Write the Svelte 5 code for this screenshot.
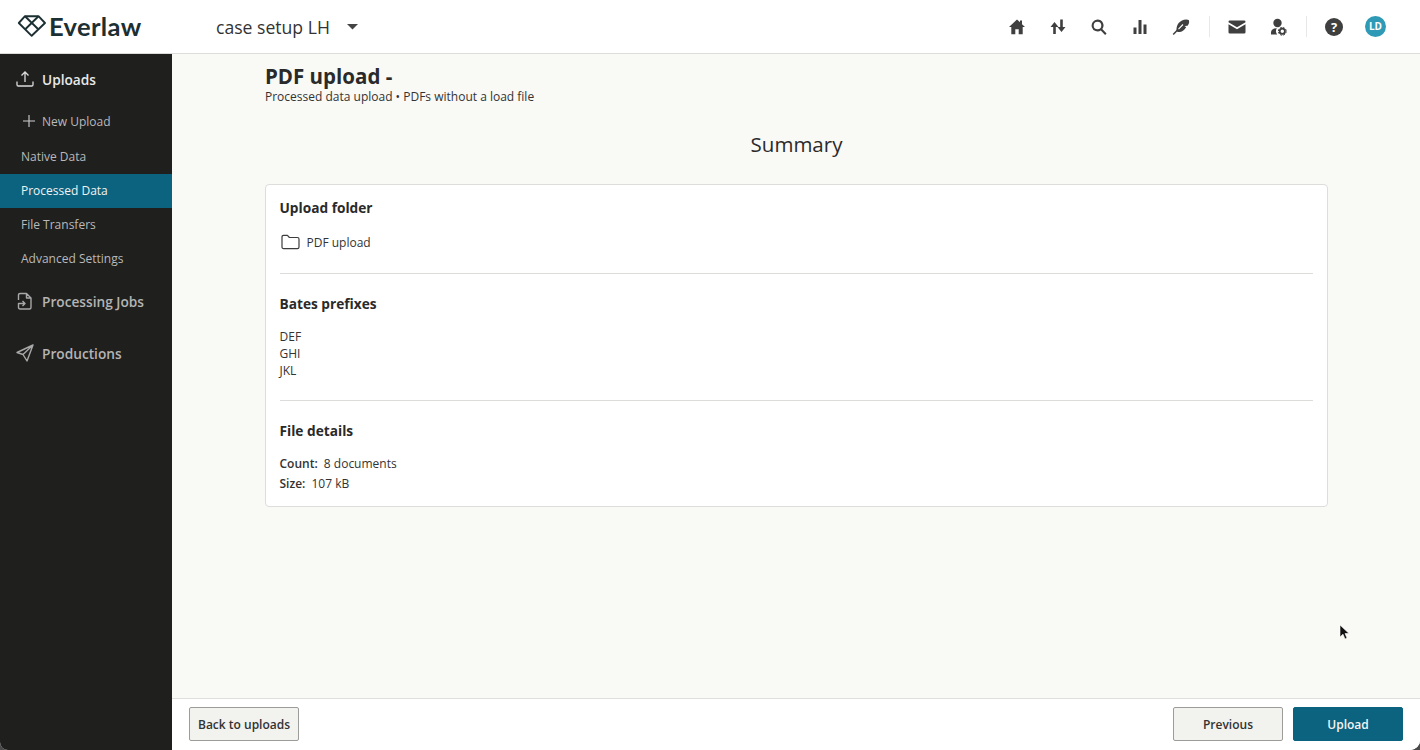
<script>
  const subnav = [
    { label: 'Native Data' },
    { label: 'Processed Data', active: true },
    { label: 'File Transfers' },
    { label: 'Advanced Settings' }
  ];
</script>

<div class="window">
<div class="app">
  <header class="top">
    <div class="logo">
      <svg width="30" height="24" viewBox="0 0 30 24" fill="none" stroke="#1c3034" stroke-width="1.900" stroke-linejoin="round">
        <path d="M8 2.200h13.500L28 9 14.700 21.800 1.800 9z"/>
        <path d="M8 2.200l13 12.800M21.500 2.200L8.500 15"/>
      </svg>
      <span class="wordmark">Everlaw</span>
    </div>
    <div class="case">
      <span>case setup LH</span>
      <svg width="11" height="6" viewBox="0 0 11 6"><path d="M0 0h11L5.500 5.500z" fill="#444"/></svg>
    </div>
    <nav class="tools">
      <svg class="ic" viewBox="0 0 18 18"><path d="M9 1.500L1 9h2.300v7.300h4v-5h3.400v5h4V9H17l-3-2.800V2.500h-2v1.800z"/></svg>
      <svg class="ic" viewBox="0 0 18 18"><path d="M5.500 4L1.500 9h2.700v7h2.600V9h2.700zM12.500 14l4-5h-2.700V1.500h-2.600V9H8.500z"/></svg>
      <svg class="ic" viewBox="0 0 18 18"><path fill-rule="evenodd" d="M7.500 1.500a6 6 0 0 1 4.800 9.600l4.300 4.300-1.500 1.500-4.300-4.300A6 6 0 1 1 7.500 1.500zm0 2.200a3.800 3.800 0 1 0 0 7.600 3.800 3.800 0 0 0 0-7.600z"/></svg>
      <svg class="ic" viewBox="0 0 18 18"><path d="M2.500 9.500h3V16h-3zM7.500 2h3v14h-3zM12.500 6.500h3V16h-3z"/></svg>
      <svg class="ic" viewBox="0 0 18 18"><path d="M1.200 16.500L6.500 11" fill="none" stroke="#3f3f3f" stroke-width="1.500"/><path d="M4.800 13.500C3.800 9.500 5.500 5 9.500 2.800 12 1.500 14.800 1 16.800 2c.8 1.800.2 4-1.200 5.700l-3 .3 1.600 1.300c-2.500 4-6 5.700-9.400 4.200z"/><path d="M6.500 11.200l4.500-4.700" fill="none" stroke="#fff" stroke-width="1.100"/></svg>
      <span class="sep"></span>
      <svg class="ic" viewBox="0 0 18 18"><path d="M.500 3.800A1.300 1.300 0 0 1 1.800 2.500h14.400a1.300 1.300 0 0 1 1.300 1.300v.5L9 9.300.500 4.300zM.500 6.300L9 11.300l8.500-5v7.900a1.300 1.300 0 0 1-1.300 1.300H1.800a1.300 1.300 0 0 1-1.300-1.300z"/></svg>
      <svg class="ic" viewBox="0 0 18 18"><circle cx="8.500" cy="5" r="4.200"/><path d="M2 16.500v-2C2 12 4 10.300 7.500 10.300h.3a5.500 5.500 0 0 0 .4 6.200z"/><circle cx="13.300" cy="13.300" r="2.600" fill="none" stroke="#3f3f3f" stroke-width="1.800"/><circle cx="13.300" cy="13.300" r="3.900" fill="none" stroke="#3f3f3f" stroke-width="1" stroke-dasharray="2 1.060"/></svg>
      <span class="sep"></span>
      <span class="help">?</span>
      <span class="avatar">LD</span>
    </nav>
  </header>

  <div class="body">
    <aside class="side">
      <div class="section first">
        <svg class="sico" viewBox="0 0 18 18" fill="none" stroke="#dcdcdc" stroke-width="1.300"><path d="M9 12V2M5.500 5.500L9 2l3.500 3.500M1 11.500v3.200c0 .8.500 1.300 1.300 1.300h13.400c.8 0 1.300-.5 1.300-1.300v-3.200"/></svg>
        <span class="white">Uploads</span>
      </div>
      <div class="new">
        <svg width="12" height="12" viewBox="0 0 12 12" stroke="#cfcfcf" stroke-width="1.100"><path d="M6 0v12M0 6h12"/></svg>
        <span>New Upload</span>
      </div>
      {#each subnav as item}
        <div class="sub" class:active={item.active}>{item.label}</div>
      {/each}
      <div class="section second">
        <svg class="sico" viewBox="0 0 18 18" fill="none" stroke="#a8a8a8" stroke-width="1.400" stroke-linejoin="round"><path d="M2.500 8V3c0-1 .7-1.500 1.500-1.500h6.500L15 6v9.500c0 .9-.7 1.500-1.500 1.500H4c-.8 0-1.500-.6-1.500-1.500V11.500h6.500M10.500 1.500V6H15M6.500 9l2.500 2.500L6.500 14"/></svg>
        <span>Processing Jobs</span>
      </div>
      <div class="section third">
        <svg class="sico" viewBox="0 0 18 18" fill="none" stroke="#a8a8a8" stroke-width="1.400" stroke-linejoin="round"><path d="M17 1L1 8.500l6 2 4 6.500zM17 1L7 10.500"/></svg>
        <span>Productions</span>
      </div>
    </aside>

    <main class="main">
      <div class="scroll">
        <h1>PDF upload -</h1>
        <p class="lede">Processed data upload • PDFs without a load file</p>
        <h2>Summary</h2>
        <section class="card">
          <div class="block folder">
            <h3>Upload folder</h3>
            <div class="row">
              <svg width="19" height="16" viewBox="0 0 19 16" fill="none" stroke="#3c3c3c" stroke-width="1.200" stroke-linejoin="round"><path d="M1 3c0-1 .6-1.700 1.600-1.700h3.800l2 2.200h8c1 0 1.600.6 1.600 1.500v8c0 1-.6 1.600-1.600 1.600H2.600C1.600 14.600 1 14 1 13z"/></svg>
              <span>PDF upload</span>
            </div>
          </div>
          <div class="block bates">
            <h3>Bates prefixes</h3>
            <div class="list"><div>DEF</div><div>GHI</div><div>JKL</div></div>
          </div>
          <div class="block details">
            <h3>File details</h3>
            <div class="kv"><b>Count:</b> 8 documents</div>
            <div class="kv"><b>Size:</b> 107 kB</div>
          </div>
        </section>
      </div>
      <footer class="foot">
        <button class="btn">Back to uploads</button>
        <div class="right">
          <button class="btn">Previous</button>
          <button class="btn primary">Upload</button>
        </div>
      </footer>
      <svg class="cursor" width="12" height="17" viewBox="0 0 12 17"><path d="M1 1v12l3-2.800 2 4.800 2-.9-2-4.600h4z" fill="#111" stroke="#fff" stroke-width=".6"/></svg>
    </main>
  </div>
</div>
</div>

<style>
  :global(body) { margin: 0; background: #fff; }
  .window { width: 1420px; height: 750px; background: #4a4a4a; overflow: hidden; }
  .app {
    width: 1420px; height: 750px; overflow: hidden; display: flex; flex-direction: column;
    border-radius: 0 0 10px 8px; background: #fff;
    font-family: "Open Sans", "Noto Sans", sans-serif; color: #333; font-size: 12px;
  }
  .top {
    height: 53px; flex: none; display: flex; align-items: center; background: #fff;
    border-bottom: 1px solid #dcdcd9;
  }
  .logo { width: 216px; padding-left: 17px; box-sizing: border-box; display: flex; align-items: center; gap: 2px; margin-top: -1px; }
  .wordmark { font-family: Lato, sans-serif; font-size: 25.500px; color: #1c3034; font-weight: 700; letter-spacing: .35px; }
  .case { display: flex; align-items: center; gap: 17px; font-size: 17.600px; font-weight: 500; color: #333; }
  .tools { margin-left: auto; display: flex; align-items: center; padding-right: 34px; }
  .ic { width: 18px; height: 18px; fill: #3f3f3f; margin-right: 23px; flex: none; }
  .sep { width: 1px; height: 21px; background: #e8e8e6; margin: 0 18px 0 -4px; }
  .help {
    width: 18px; height: 18px; border-radius: 50%; background: #3f3f3f; color: #fff; font-weight: 700;
    font-size: 13px; line-height: 18px; text-align: center; margin-right: 22px;
  }
  .avatar {
    width: 21px; height: 21px; border-radius: 50%; background: #2f9ab5; color: #fff; font-weight: 700;
    font-size: 10px; line-height: 21px; text-align: center;
  }
  .body { flex: 1; display: flex; min-height: 0; }
  .side {
    width: 172px; flex: none; background: #1f1f1e; color: #b4b4b4;
    display: flex; flex-direction: column;
  }
  .section { display: flex; align-items: center; gap: 8px; padding-left: 16px; font-size: 13.700px; font-weight: 600; height: 20px; color: #b4b4b4; }
  .section.first { margin-top: 15px; }
  .section.second { margin-top: 15px; }
  .section.third { margin-top: 32px; }
  .white { color: #e8e8e8; }
  .sico { width: 18px; height: 18px; flex: none; }
  .new { display: flex; align-items: center; gap: 7px; padding-left: 23px; height: 36px; margin: 14px 0 1px; color: #b9b9b9; }
  .sub { height: 34px; line-height: 34px; padding-left: 21px; color: #b9b9b9; }
  .sub.active { background: #0c637f; color: #f2f2f2; font-weight: 500; }
  .main { flex: 1; display: flex; flex-direction: column; position: relative; background: #f9f9f6; min-width: 0; }
  .scroll { flex: 1; padding: 10px 92px 0 93px; min-height: 0; }
  h1 { margin: 0 0 1px; font-size: 20.500px; font-weight: 700; line-height: 24px; color: #2a2a2a; }
  .lede { margin: 0; line-height: 16px; color: #333; }
  h2 { margin: 25px 0 0; font-size: 20.500px; font-weight: 400; line-height: 28px; text-align: center; color: #2a2a2a; }
  .card {
    margin-top: 26px; background: #fff; border: 1px solid #dddddb; border-radius: 4px; padding: 0 14px 0 13.500px; height: 323px; box-sizing: border-box;
  }
  .block { border-bottom: 1px solid #dcdcda; }
  .block:last-child { border-bottom: 0; }
  h3 { margin: 0; font-size: 13.700px; font-weight: 700; line-height: 20px; color: #2a2a2a; }
  .folder { padding-top: 13px; height: 89px; box-sizing: border-box; }
  .row { display: flex; align-items: center; gap: 7px; margin-top: 14px; height: 20px; margin-left: 1px; }
  .bates { padding-top: 20px; height: 127px; box-sizing: border-box; }
  .list { margin-top: 14px; line-height: 17px; }
  .details { padding-top: 20px; }
  .kv { line-height: 20px; }
  .details h3 + .kv { margin-top: 13px; }
  .kv b { font-weight: 600; margin-right: 3px; }
  .foot {
    height: 52px; flex: none; border-top: 1px solid #dfdfdc; background: #fff; display: flex; align-items: center; justify-content: space-between;
    padding: 0 17px 2px; box-sizing: border-box;
  }
  .right { display: flex; gap: 10px; }
  .btn {
    font: 600 12px "Open Sans", sans-serif; color: #333; height: 34px; padding: 2px 8px 0; background: #f2f2ef; border: 1px solid #9c9c9a; border-radius: 2px;
  }
  .right .btn { width: 110px; }
  .primary { background: #0c637f; border-color: #0c637f; color: #f4f4f4; }
  .cursor { position: absolute; left: 1167px; top: 570px; }
</style>
